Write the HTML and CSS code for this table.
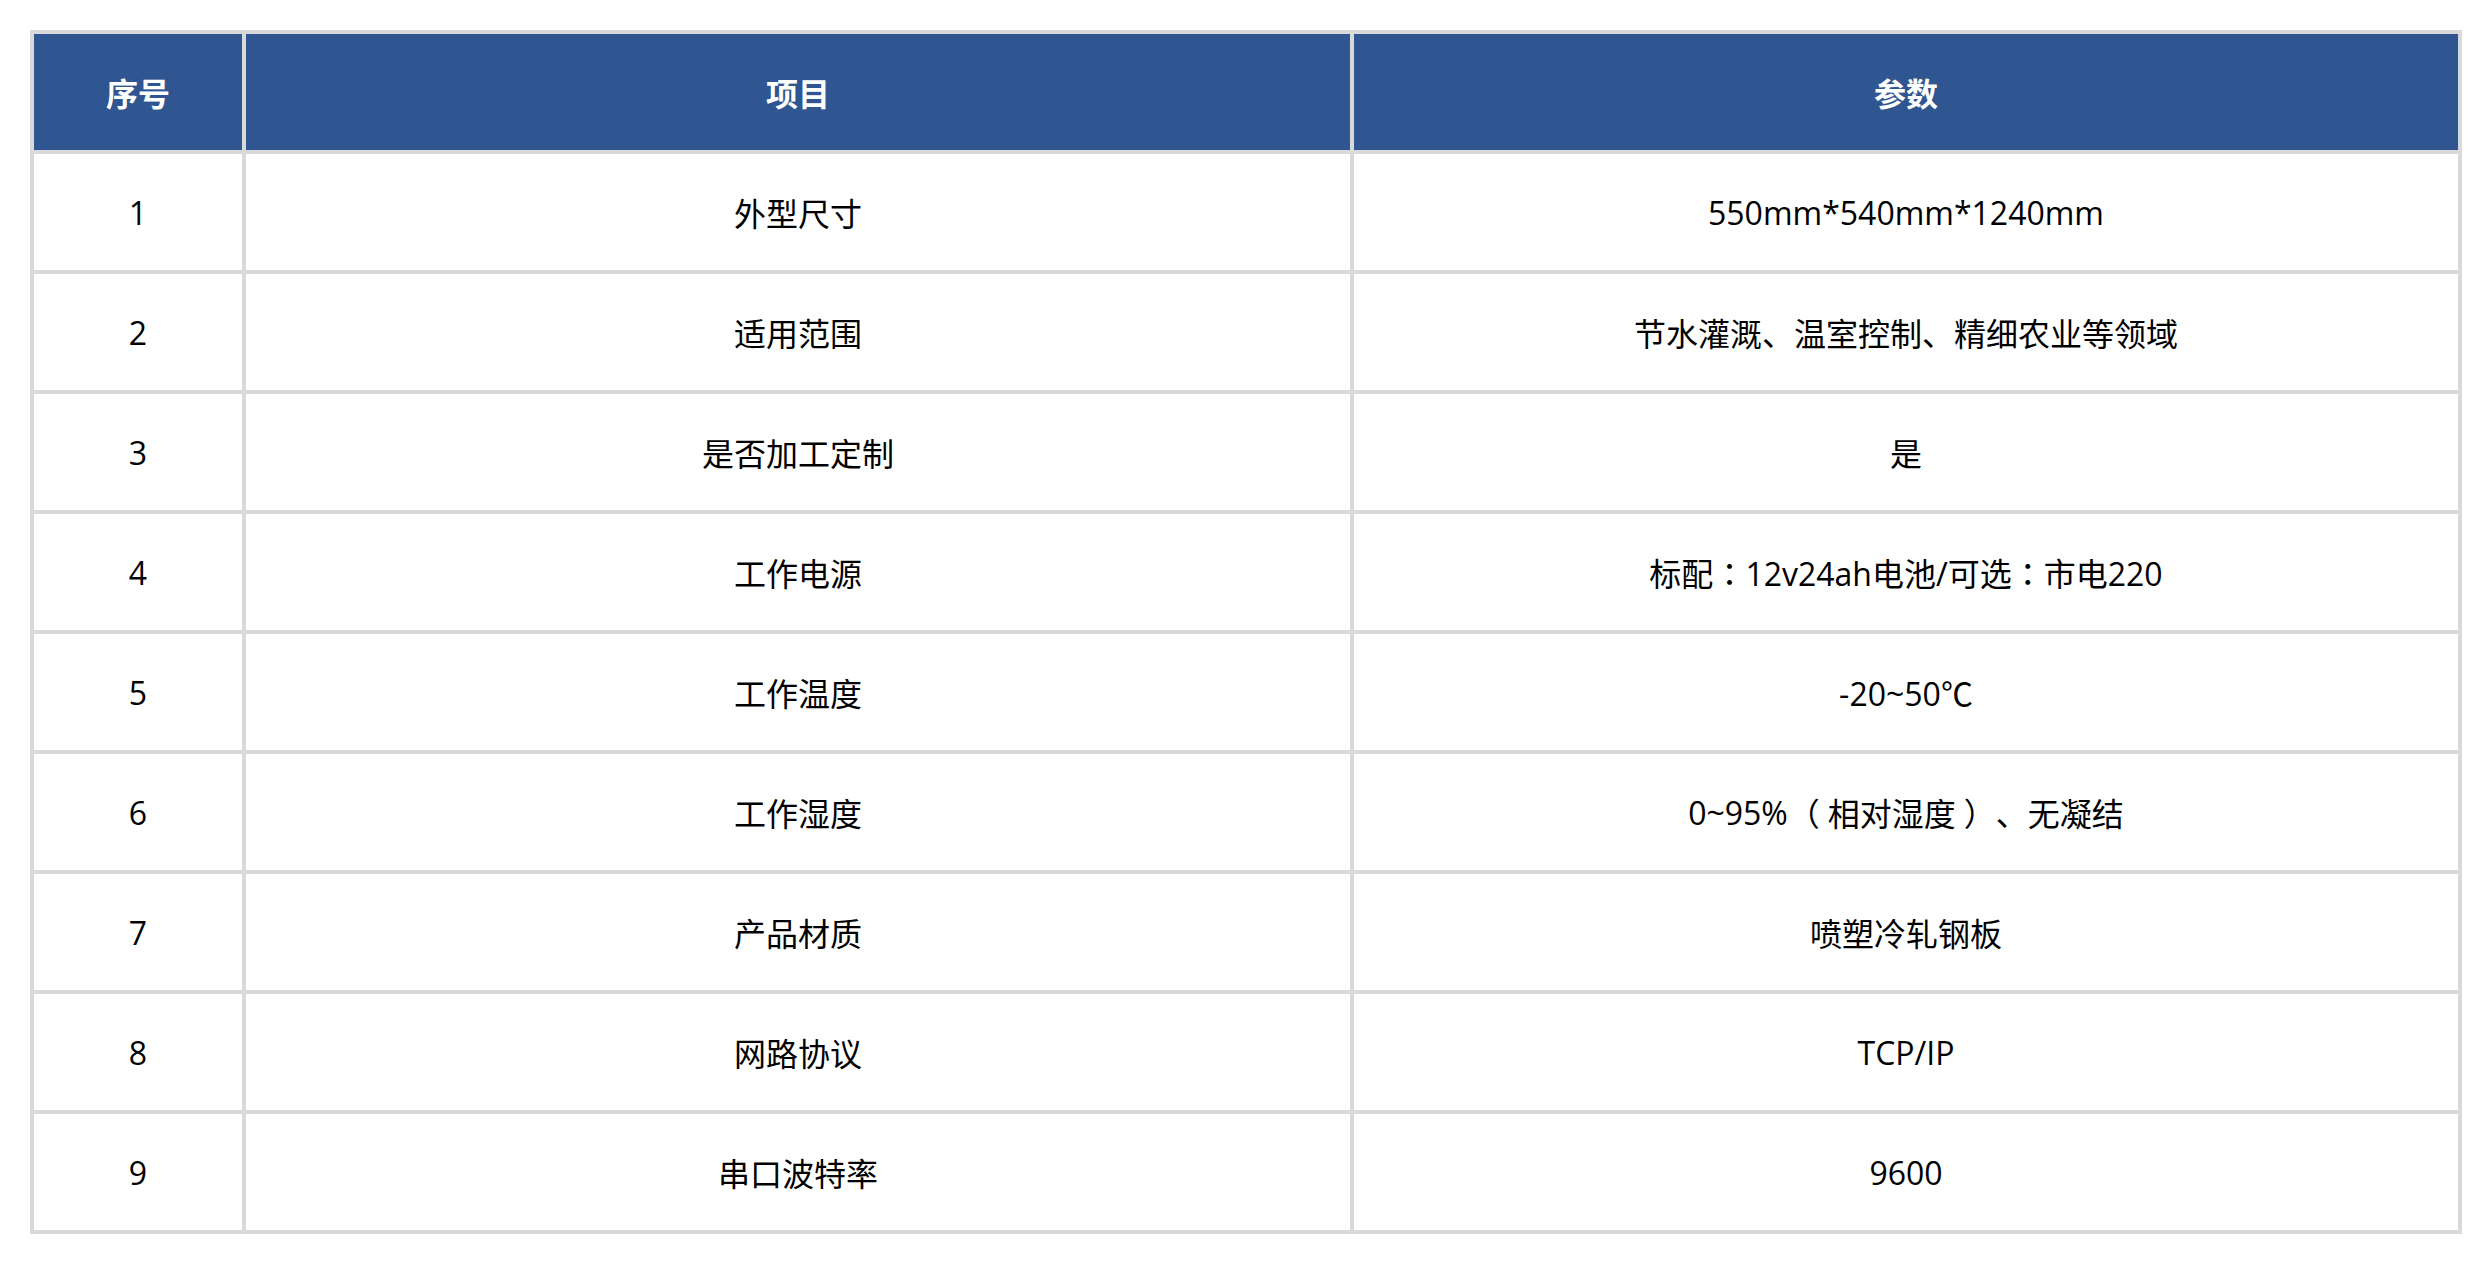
FILE: index.html
```html
<!DOCTYPE html>
<html lang="zh">
<head>
<meta charset="utf-8">
<link rel="stylesheet" href="styles.css">
</head>
<body>
<div class="spec">
  <div class="cell head">序号</div><div class="cell head">项目</div><div class="cell head">参数</div>
  <div class="cell">1</div><div class="cell">外型尺寸</div><div class="cell">550mm*540mm*1240mm</div>
  <div class="cell">2</div><div class="cell">适用范围</div><div class="cell">节水灌溉、温室控制、精细农业等领域</div>
  <div class="cell">3</div><div class="cell">是否加工定制</div><div class="cell">是</div>
  <div class="cell">4</div><div class="cell">工作电源</div><div class="cell">标配<span class="pc">：</span>12v24ah电池/可选<span class="pc">：</span>市电220</div>
  <div class="cell">5</div><div class="cell">工作温度</div><div class="cell">-20~50℃</div>
  <div class="cell">6</div><div class="cell">工作湿度</div><div class="cell">0~95%<span class="po">（</span>相对湿度<span class="pcl">）</span>、无凝结</div>
  <div class="cell">7</div><div class="cell">产品材质</div><div class="cell">喷塑冷轧钢板</div>
  <div class="cell">8</div><div class="cell">网路协议</div><div class="cell">TCP/IP</div>
  <div class="cell">9</div><div class="cell">串口波特率</div><div class="cell">9600</div>
</div>
</body>
</html>
```
FILE: styles.css
```css
html, body {
  margin: 0;
  padding: 0;
  background: #ffffff;
}
body {
  padding: 30px;
  font-family: "Open Sans", "Noto Sans CJK SC", sans-serif;
}
.spec {
  display: grid;
  grid-template-columns: 208px 1104px 1104px;
  grid-auto-rows: 116px;
  gap: 4px;
  padding: 4px;
  background: #d9d9d9;
  width: max-content;
}
.cell {
  background: #ffffff;
  display: flex;
  align-items: center;
  justify-content: center;
  font-size: 32px;
  color: #000000;
  white-space: nowrap;
}
.cell.head {
  background: #2f5691;
  color: #ffffff;
  font-weight: 700;
  font-family: "Noto Sans CJK SC", sans-serif;
}
.pc {
  font-family: "Noto Sans CJK TC", sans-serif;
}
.po {
  padding-right: 0.25em;
}
.pcl {
  padding-left: 0.25em;
}
```
